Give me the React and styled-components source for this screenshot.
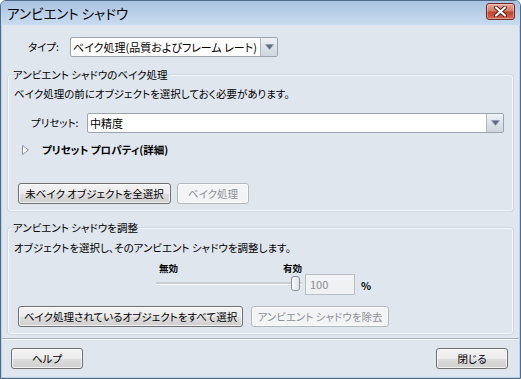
import React from "react";
import styled, { createGlobalStyle } from "styled-components";

const GlobalStyle = createGlobalStyle`
  html, body {
    margin: 0;
    padding: 0;
    background: #ffffff;
  }
  body {
    font-family: "Noto Sans CJK JP", "Liberation Sans", sans-serif;
    font-size: 10.5px;
    font-feature-settings: "palt";
    color: #000;
  }
  * { box-sizing: border-box; }
`;

const Window = styled.div`
  width: 521px;
  height: 379px;
  display: flex;
  flex-direction: column;
  border: 1px solid #4e6b8c;
  border-radius: 6px 6px 0 0;
  background: #dfe6ee;
  overflow: hidden;
`;

const TitleBar = styled.div`
  height: 24px;
  flex: none;
  display: flex;
  align-items: center;
  justify-content: space-between;
  padding: 0 5px 0 6px;
  background: linear-gradient(#a8c2e0, #bdd2ea 60%, #c8dbef);
  font-size: 13.5px;
  line-height: 16px;
  color: #000;
`;

const CloseBtn = styled.div`
  width: 29px;
  height: 17px;
  margin-top: -3px;
  display: flex;
  align-items: center;
  justify-content: center;
  border: 1px solid #6d2a24;
  border-radius: 3px;
  background: linear-gradient(#e8a89b, #d27a68 45%, #c2442f 55%, #d3664e);
  box-shadow: inset 0 0 0 1px rgba(255, 255, 255, 0.35);
`;

const Body = styled.div`
  flex: 1;
  display: flex;
  flex-direction: column;
  padding: 0 6px;
  border-left: 1px solid #b9cfe8;
  border-right: 1px solid #b9cfe8;
  border-bottom: 1px solid #b9cfe8;
  background: #dfe6ee;
`;

const Row = styled.div`
  display: flex;
  align-items: center;
  margin-top: ${(p) => p.$mt || 0}px;
  padding-left: ${(p) => p.$indent || 0}px;
  padding-right: ${(p) => p.$right || 0}px;
  gap: ${(p) => p.$gap || 0}px;
  justify-content: ${(p) => p.$justify || "flex-start"};
`;

const Label = styled.span`
  width: ${(p) => p.$w}px;
  flex: none;
  line-height: 14px;
`;

const Select = styled.div`
  width: ${(p) => (p.$w ? `${p.$w}px` : "auto")};
  flex: ${(p) => (p.$w ? "none" : 1)};
  height: 20px;
  display: flex;
  background: #fff;
  border: 1px solid #9aa4ae;
  border-radius: 2px;
  overflow: hidden;
`;

const SelectText = styled.div`
  flex: 1;
  min-width: 0;
  overflow: hidden;
  padding-left: 2px;
  line-height: 18px;
  font-size: 11px;
  white-space: nowrap;
`;

const SelectArrow = styled.div`
  width: 17px;
  flex: none;
  display: flex;
  align-items: center;
  justify-content: center;
  border-left: 1px solid #b0b8c1;
  background: linear-gradient(#f0f3f6, #dde3ea 50%, #cdd5de);
`;

const Group = styled.fieldset`
  margin: ${(p) => p.$mt}px 0 0;
  padding: ${(p) => p.$pt}px 8px 6px 5px;
  border: 1px solid #f6f8fb;
  border-radius: 3px;
  box-shadow: 0 0 0 1px #cfd7e0;
  min-width: 0;
`;

const Legend = styled.legend`
  padding: 0 2px 0 1px;
  margin-left: -2px;
  line-height: 14px;
  font-size: 10.5px;
`;

const Text = styled.div`
  line-height: 14px;
  white-space: nowrap;
`;

const Expander = styled.div`
  display: flex;
  align-items: center;
  margin-top: 10px;
  padding-left: 8px;
  line-height: 14px;
  font-weight: bold;
  gap: 13px;
`;

const Button = styled.div`
  height: 21px;
  width: ${(p) => (p.$w ? `${p.$w}px` : "auto")};
  flex: none;
  display: flex;
  align-items: center;
  justify-content: center;
  white-space: nowrap;
  overflow: hidden;
  border: 1px solid ${(p) => (p.$disabled ? "#b3b8bd" : "#707070")};
  border-radius: 3px;
  color: ${(p) => (p.$disabled ? "#8b8f93" : "#000")};
  background: ${(p) =>
    p.$disabled
      ? "#f2f4f6"
      : "linear-gradient(#f3f3f3, #ebebeb 50%, #dddddd 51%, #cfcfcf)"};
  box-shadow: inset 0 0 0 1px rgba(255, 255, 255, 0.7);
`;

const SliderRow = styled.div`
  display: flex;
  align-items: flex-end;
  margin-top: 7px;
  padding-left: 142px;
`;

const SliderCol = styled.div`
  width: 146px;
  display: flex;
  flex-direction: column;
`;

const TickLabels = styled.div`
  display: flex;
  justify-content: space-between;
  padding: 0 0 0 3px;
  font-size: 9.5px;
  font-weight: bold;
  line-height: 13px;
`;

const Track = styled.div`
  position: relative;
  height: 20px;
  &::before {
    content: "";
    position: absolute;
    left: 0;
    right: 0;
    top: 7px;
    height: 2px;
    background: #c9ced4;
    border-bottom: 1px solid #fff;
  }
`;

const Thumb = styled.div`
  position: absolute;
  left: 135px;
  top: 1px;
  width: 9px;
  height: 15px;
  border: 1px solid #8a9098;
  border-radius: 3px;
  background: linear-gradient(90deg, #fafbfc, #dfe3e8);
`;

const NumInput = styled.div`
  width: 50px;
  height: 21px;
  margin-left: 3px;
  padding-left: 4px;
  line-height: 19px;
  font-size: 11px;
  color: #8a8d91;
  background: #f0f1f2;
  border: 1px solid #b9bec3;
`;

const Percent = styled.span`
  margin-left: 6px;
  margin-bottom: 2px;
  font-weight: bold;
  line-height: 14px;
`;

const Separator = styled.div`
  margin-top: 4px;
  height: 2px;
  border-top: 1px solid #a6b0bb;
  border-bottom: 1px solid #f8fafc;
  margin-left: -6px;
  margin-right: -6px;
`;

const DropArrow = () => (
  <svg width="9" height="6" viewBox="0 0 9 6">
    <path d="M0.5 0.5 H8.5 L4.5 5.5 Z" fill="#5d6d80" stroke="#8f9bab" strokeWidth="0.8" />
  </svg>
);

export default function App() {
  return (
    <>
      <GlobalStyle />
      <Window>
        <TitleBar>
          <span>アンビエント シャドウ</span>
          <CloseBtn>
            <svg width="13" height="11" viewBox="0 0 13 11">
              <path
                d="M2 1.5 L11 9.5 M11 1.5 L2 9.5"
                stroke="#5a1d17"
                strokeWidth="4"
                strokeLinecap="round"
              />
              <path
                d="M2 1.5 L11 9.5 M11 1.5 L2 9.5"
                stroke="#ffffff"
                strokeWidth="2.2"
                strokeLinecap="round"
              />
            </svg>
          </CloseBtn>
        </TitleBar>
        <Body>
          <Row $mt={12} $indent={20}>
            <Label $w={42}>タイプ:</Label>
            <Select $w={208}>
              <SelectText>ベイク処理(品質およびフレーム レート)</SelectText>
              <SelectArrow>
                <DropArrow />
              </SelectArrow>
            </Select>
          </Row>

          <Group $mt={11} $pt={5}>
            <Legend>アンビエント シャドウのベイク処理</Legend>
            <Text>ベイク処理の前にオブジェクトを選択しておく必要があります。</Text>
            <Row $mt={12} $indent={17}>
              <Label $w={56}>プリセット:</Label>
              <Select>
                <SelectText>中精度</SelectText>
                <SelectArrow>
                  <DropArrow />
                </SelectArrow>
              </Select>
            </Row>
            <Expander>
              <svg width="7" height="10" viewBox="0 0 7 10">
                <path d="M0.5 0.5 L6.5 5 L0.5 9.5 Z" fill="#ffffff" stroke="#8d9298" />
              </svg>
              <span>プリセット プロパティ(詳細)</span>
            </Expander>
            <Row $mt={26} $indent={4} $gap={6}>
              <Button $w={153}>未ベイク オブジェクトを全選択</Button>
              <Button $w={72} $disabled>
                ベイク処理
              </Button>
            </Row>
          </Group>

          <Group $mt={10} $pt={6}>
            <Legend>アンビエント シャドウを調整</Legend>
            <Text>オブジェクトを選択し、そのアンビエント シャドウを調整します。</Text>
            <SliderRow>
              <SliderCol>
                <TickLabels>
                  <span>無効</span>
                  <span>有効</span>
                </TickLabels>
                <Track>
                  <Thumb />
                </Track>
              </SliderCol>
              <NumInput>100</NumInput>
              <Percent>%</Percent>
            </SliderRow>
            <Row $mt={11} $indent={4} $gap={8}>
              <Button $w={225}>ベイク処理されているオブジェクトをすべて選択</Button>
              <Button $w={138} $disabled>
                アンビエント シャドウを除去
              </Button>
            </Row>
          </Group>

          <Separator />
          <Row $mt={8} $indent={3} $right={5} $justify="space-between">
            <Button $w={72}>ヘルプ</Button>
            <Button $w={72}>閉じる</Button>
          </Row>
        </Body>
      </Window>
    </>
  );
}
